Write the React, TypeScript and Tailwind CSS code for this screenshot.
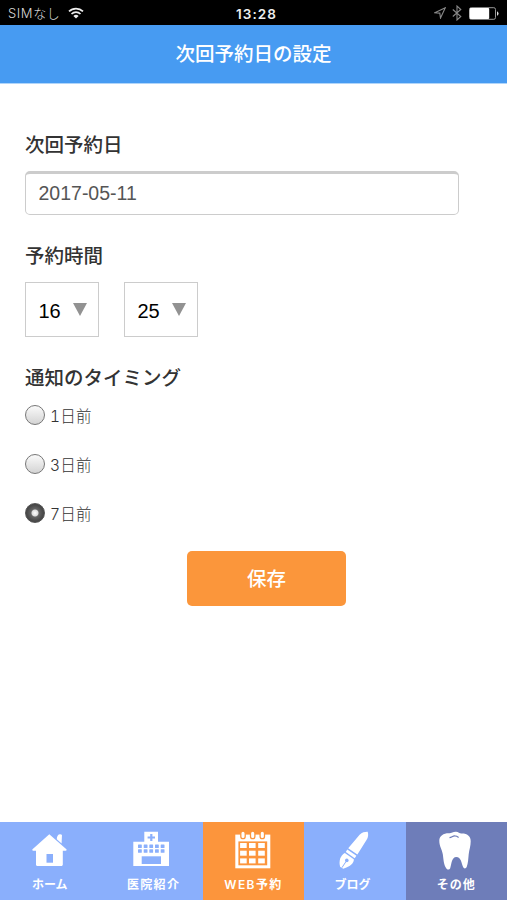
import { useState } from "react"
import type { ReactNode } from "react"

const HomeIcon = () => (
  <svg width="40" height="40" viewBox="1 0 40 40" fill="#fff">
    <path d="M19.3 4.2 36.4 19.2c.5.6.2 1.5-.7 1.5H32.8V34.5c0 .9-.6 1.5-1.5 1.5H7.5C6.6 36 6 35.4 6 34.5V20.7H3.2c-.9 0-1.2-.9-.7-1.5Z" />
    <path d="M26.8 9.2c0-3 1.2-5 3.3-5 1.7 0 2.1.9 1.8 2.2l-.3 7Z" />
    <rect x="16.5" y="24" width="6.5" height="8.7" fill="#8aaffc" />
  </svg>
)

const HospitalIcon = () => (
  <svg width="40" height="40" viewBox="0 0 40 40" fill="#fff">
    <path d="M12.3 1.7H26V11.7H37V36H1.3V11.7H12.3Z" />
    <g fill="#8aaffc">
      <path d="M18.2 4h2.2v2.4h2.6v2.2h-2.6V11h-2.2V8.6h-2.6V6.4h2.6Z" />
      {[6, 11.7, 17.3, 23, 28.7].map((x) => (
        <g key={x}>
          <rect x={x} y="14.5" width="3.8" height="3.4" rx=".5" />
          <rect x={x} y="19.3" width="3.8" height="3.4" rx=".5" />
        </g>
      ))}
      <rect x="9.7" y="26.3" width="19.3" height="7.7" />
    </g>
  </svg>
)

const CalendarIcon = () => (
  <svg width="40" height="40" viewBox="0 0 40 40" fill="#fff">
    <rect x="1.3" y="4.6" width="35" height="33.7" />
    <rect x="4.4" y="11.4" width="28.8" height="23.9" fill="#fc953c" />
    {[13, 20.7, 28.4].map((y) =>
      [6.1, 15, 24.2].map((x) => (
        <rect key={`${x}-${y}`} x={x} y={y} width="6.6" height="5" />
      ))
    )}
    {[9, 18.7, 28.3].map((x) => (
      <rect
        key={x}
        x={x - 2.2}
        y="1"
        width="4.4"
        height="7.6"
        rx="2.2"
        stroke="#fc953c"
        strokeWidth="1.3"
      />
    ))}
  </svg>
)

const PenIcon = () => (
  <svg width="40" height="40" viewBox="0 0 40 40" fill="#fff">
    <path d="M24.6 4.8C27.2 2 30.5 1.6 32.7 1.7c.8 2.5.7 5.5-1.2 8.3L22.4 24.6l-9.2-6.4Z" />
    <path d="m12.3 19.5 9.1 6.3-1.7 2.4-8.9-6.2Z" />
    <path d="m9.8 23.1 9 6.2c.2 3.7-3.2 7.3-10.6 9.4l-3.1-2C3.6 31 5.3 25.6 9.8 23.1Z" />
    <path d="m6.9 37.7 4.2-6.3" stroke="#8aaffc" strokeWidth="1" />
    <circle cx="11.8" cy="30.4" r="1.8" fill="#8aaffc" />
  </svg>
)

const ToothIcon = () => (
  <svg width="40" height="40" viewBox="0 0 40 40" fill="#fff">
    <path d="M13.5 3.3c2-.2 3.6-1.7 6.5-1.6 2.4.1 3.6 1.7 5.2 1.9 5.2-.4 9.5 2.2 9.5 7.6 0 5-1.5 8.6-2 13-.4 4.5-.6 9-2 12.900-.8 1.700-2.900 1.700-3.600 0-1.600-3.900-2-10.100-6.800-10.100-4.700 0-4.700 6.900-6.100 11.200-.7 1.900-3.200 1.800-4 .1C7.600 34.500 7.500 29 6.800 24.200 6 19.400 3.300 16.300 3.300 10.800c0-5.300 4.700-7.800 10.200-7.500Z" />
    <path
      d="M13.5 7.6c2.4-.1 3-1.9 5.500-1.700 2 .1 2.500.7 3.600 1.600"
      fill="none"
      stroke="#6e7db9"
      strokeWidth="1.1"
    />
  </svg>
)

const StatusBar = () => (
  <div className="flex h-[25px] shrink-0 items-center bg-black px-2 text-[#d8d8d8]">
    <div className="flex flex-1 items-center gap-[7px] text-[13px] leading-[25px]">
      <span className="w-[53px] whitespace-nowrap pt-0.5 font-['Inter','Noto_Sans_CJK_JP',sans-serif] tracking-[0.6px] font-light">SIMなし</span>
      <svg width="16" height="12" viewBox="0 0 16 12" fill="none" stroke="#eee" strokeWidth="1.7">
        <path d="M1 4.4a10 10 0 0 1 14 0M3.5 7a6.5 6.5 0 0 1 9 0" />
        <path d="M5.4 9a3.7 3.7 0 0 1 5.2 0L8 11.6Z" fill="#eee" stroke="none" />
      </svg>
    </div>
    <span className="pt-[3px] pl-[6px] font-['Inter',sans-serif] text-[13.5px] leading-[25px] font-semibold tracking-[1.1px] text-[#eee]">13:28</span>
    <div className="flex flex-1 items-center justify-end gap-[6px] pt-px">
      <svg width="12" height="12" viewBox="0 0 12 12" fill="none" stroke="#888" strokeWidth="1.1">
        <path d="M11.3.8.8 5.7l5 .4.7 5Z" />
      </svg>
      <svg width="10" height="16" viewBox="0 0 10 16" fill="none" stroke="#888" strokeWidth="1.1">
        <path d="m.8 4.5 8 7L5 15V1l3.8 3.5-8 7" />
      </svg>
      <svg width="30" height="13" viewBox="0 0 30 13" className="ml-px">
        <rect x=".5" y=".7" width="26" height="11.6" rx="1.7" fill="none" stroke="#999" />
        <rect x=".7" y="1" width="19.5" height="11" rx="1" fill="#fff" />
        <path d="M28 4.2a2.5 2.5 0 0 1 0 4.6Z" fill="#ddd" />
      </svg>
    </div>
  </div>
)

const TimeSelect = ({ value }: { value: string }) => (
  <button
    type="button"
    className="flex h-[55px] w-[74px] items-center justify-between border border-[#ccc] pr-[11px] pl-[12.5px] text-[20px] text-black"
  >
    <span className="pt-[2px]">{value}</span>
    <svg width="14" height="13" viewBox="0 0 14 13">
      <path d="M0 0h14L7 13Z" fill="#929292" />
    </svg>
  </button>
)

type TimingProps = {
  label: string
  checked: boolean
  onChange: () => void
}

const TimingOption = ({ label, checked, onChange }: TimingProps) => (
  <label className="flex h-[49px] items-start gap-[5px]">
    <input
      type="radio"
      name="timing"
      checked={checked}
      onChange={onChange}
      className="size-5 appearance-none rounded-full border-[1.5px] border-[#777] bg-linear-to-b from-[#fafafa] to-[#d4d4d4] checked:border-[#555] checked:bg-[radial-gradient(circle,#fff_0,#ddd_3px,#666_4px,#505050_7px,#444_9px)]"
    />
    <span className="pt-px font-['Inter','Noto_Sans_CJK_JP',sans-serif] text-[15.5px] leading-[22px] font-light tracking-[0.2px] text-[#333] tabular-nums">
      {label}
    </span>
  </label>
)

type TabProps = {
  label: string
  icon: ReactNode
  className: string
  labelClass?: string
}

const Tab = ({ label, icon, className, labelClass = "" }: TabProps) => (
  <div className={`flex flex-1 flex-col items-center pt-2 ${className}`}>
    {icon}
    <span
      className={`mt-[6px] font-['Inter','Noto_Sans_CJK_JP',sans-serif] text-[12px] leading-[18px] font-semibold whitespace-nowrap text-white ${labelClass}`}
    >
      {label}
    </span>
  </div>
)

const timings = ["1日前", "3日前", "7日前"]

const App = () => {
  const [fecha, setFecha] = useState("2017-05-11")
  const [timing, setTiming] = useState("7日前")

  return (
    <div className="flex h-[900px] w-[507px] flex-col overflow-hidden bg-white font-['Liberation_Sans','Noto_Sans_CJK_JP',sans-serif] text-[#333]">
      <StatusBar />
      <header className="flex h-[59px] shrink-0 items-center justify-center border-b border-[#b0d5fa] bg-[#479bf2]">
        <h1 className="text-[19.5px] leading-[28px] font-medium text-white">次回予約日の設定</h1>
      </header>

      <main className="flex flex-1 flex-col px-[25px] pt-[47px]">
        <h2 className="text-[19.5px] leading-[28px] font-medium">次回予約日</h2>
        <input
          value={fecha}
          onChange={(e) => setFecha(e.target.value)}
          className="mt-[12px] h-[44px] w-[434px] rounded-[5px] border border-t-[3px] border-[#ccc] px-[12.5px] pb-px text-[19.5px] text-[#555]"
        />

        <h2 className="mt-[27px] text-[19.5px] leading-[28px] font-medium">予約時間</h2>
        <div className="mt-[12px] flex gap-[25px]">
          <TimeSelect value="16" />
          <TimeSelect value="25" />
        </div>

        <h2 className="mt-[27px] text-[19.5px] leading-[28px] font-medium">通知のタイミング</h2>
        <div className="mt-[13px] flex flex-col">
          {timings.map((t) => (
            <TimingOption key={t} label={t} checked={t === timing} onChange={() => setTiming(t)} />
          ))}
        </div>

        <button
          type="button"
          className="-mt-[1.5px] ml-[162px] h-[55px] w-[159px] shrink-0 rounded-[5px] bg-[#fb963b] pt-[3px] text-[19.5px] font-medium text-white"
        >
          保存
        </button>
      </main>

      <nav className="flex h-[78px] shrink-0">
        <Tab label="ホーム" icon={<HomeIcon />} className="bg-[#8aaffc]" labelClass="pr-[2px]" />
        <Tab label="医院紹介" icon={<HospitalIcon />} className="bg-[#8aaffc]" labelClass="tracking-[1.3px] pl-[3px]" />
        <Tab label="WEB予約" icon={<CalendarIcon />} className="bg-[#fc953c]" labelClass="tracking-[1.4px]" />
        <Tab label="ブログ" icon={<PenIcon />} className="bg-[#8aaffc]" labelClass="pr-[5px]" />
        <Tab label="その他" icon={<ToothIcon />} className="bg-[#6e7db9]" labelClass="tracking-[1px]" />
      </nav>
    </div>
  )
}

export default App
